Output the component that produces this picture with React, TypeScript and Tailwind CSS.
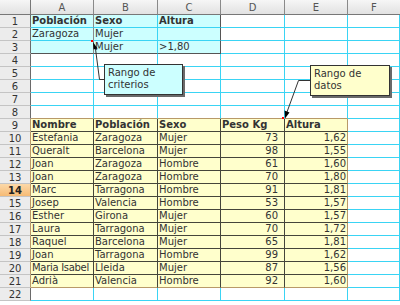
import React from "react";

type C = { t: string; b?: boolean; r?: boolean };

const rows: Record<number, C[]> = {
  1: [{ t: "Población", b: true }, { t: "Sexo", b: true }, { t: "Altura", b: true }],
  2: [{ t: "Zaragoza" }, { t: "Mujer" }],
  3: [{ t: "" }, { t: "Mujer" }, { t: ">1,80" }],
  9: [
    { t: "Nombre", b: true },
    { t: "Población", b: true },
    { t: "Sexo", b: true },
    { t: "Peso Kg", b: true },
    { t: "Altura", b: true },
  ],
};

const data: [string, string, string, string, string][] = [
  ["Estefania", "Zaragoza", "Mujer", "73", "1,62"],
  ["Queralt", "Barcelona", "Mujer", "98", "1,55"],
  ["Joan", "Zaragoza", "Hombre", "61", "1,60"],
  ["Joan", "Zaragoza", "Hombre", "70", "1,80"],
  ["Marc", "Tarragona", "Hombre", "91", "1,81"],
  ["Josep", "Valencia", "Hombre", "53", "1,57"],
  ["Esther", "Girona", "Mujer", "60", "1,57"],
  ["Laura", "Tarragona", "Mujer", "70", "1,72"],
  ["Raquel", "Barcelona", "Mujer", "65", "1,81"],
  ["Joan", "Tarragona", "Hombre", "99", "1,62"],
  ["Maria Isabel", "Lleida", "Mujer", "87", "1,56"],
  ["Adrià", "Valencia", "Hombre", "92", "1,60"],
];
data.forEach((d, i) => {
  rows[10 + i] = [
    { t: d[0] },
    { t: d[1] },
    { t: d[2] },
    { t: d[3], r: true },
    { t: d[4], r: true },
  ];
});

const LETTERS = ["A", "B", "C", "D", "E", "F"];

function cellCls(r: number, c: number): string {
  const inData = r >= 9 && r <= 21 && c >= 1 && c <= 5;
  const inCrit = r >= 1 && r <= 3 && c >= 1 && c <= 3;
  let bg = "bg-white";
  if (inData) bg = "bg-[#ffffcc]";
  else if (inCrit) bg = "bg-[#ccffff]";
  let br = "border-r-[#3ad4f4]";
  if (inData) br = c === 5 ? "border-r-[#b89968]" : "border-r-[#45453a]";
  else if (inCrit)
    br = c === 1 ? "border-r-[#8a8a8a]" : c === 3 ? "border-r-[#555555]" : "border-r-[#3ad4f4]";
  let bb = "border-b-[#3ad4f4]";
  if (inData) bb = r === 21 ? "border-b-[#b89968]" : "border-b-[#45453a]";
  else if (r === 8 && c >= 1 && c <= 5) bb = "border-b-[#b89968]";
  else if (inCrit && r === 3) bb = "border-b-[#555555]";
  return `${bg} ${br} ${bb}`;
}

export default function App() {
  const cells: React.ReactNode[] = [];
  cells.push(
    <div
      key="corner"
      className="border-r border-b border-r-[#777777] border-b-[#777777] bg-gradient-to-b from-[#f6f6f6] to-[#e2e2e2]"
    />
  );
  LETTERS.forEach((l, i) =>
    cells.push(
      <div
        key={"h" + l}
        className={`flex items-center justify-center border-b border-b-[#777777] bg-gradient-to-b from-[#f6f6f6] to-[#e2e2e2] text-[#555555] ${
          i < 5 ? "border-r border-r-[#8a8a8a]" : ""
        }`}
      >
        {l}
      </div>
    )
  );
  for (let r = 1; r <= 22; r++) {
    const sel = r === 14;
    const inDataRow = r >= 9 && r <= 21;
    cells.push(
      <div
        key={"r" + r}
        className={`flex items-center justify-center border-r border-b border-b-[#c4c4c4] ${
          inDataRow ? "border-r-[#b89968]" : "border-r-[#6a6a6a]"
        } ${sel ? "bg-gradient-to-b from-[#fcd9a8] to-[#f6bb74] font-bold text-[#222222]" : "bg-[#ececec] text-[#333333]"}`}
      >
        {r}
      </div>
    );
    for (let c = 1; c <= 6; c++) {
      const cd = rows[r]?.[c - 1];
      const right = cd?.r;
      const tight = cd?.t === "Maria Isabel";
      cells.push(
        <div
          key={`c${r}-${c}`}
          className={`overflow-hidden border-r border-b whitespace-nowrap leading-[12px] text-[#333333] ${cellCls(
            r,
            c
          )} ${right ? (c === 4 ? "text-right pr-[6px]" : "text-right pr-[1px]") : "pl-[1px]"} ${
            cd?.b ? "font-bold" : ""
          } ${tight ? "tracking-[-0.3px]" : ""}`}
        >
          {cd?.t ?? ""}
        </div>
      );
    }
  }

  return (
    <div
      className="relative w-[400px] h-[305px] overflow-hidden bg-white text-[10px]"
      style={{ fontFamily: '"DejaVu Sans", Verdana, sans-serif' }}
    >
      <div className="grid grid-cols-[31px_63px_64px_63px_64px_63px_52px] grid-rows-[15px_repeat(22,13px)]">
        {cells}
      </div>

      <div className="absolute left-[104px] top-[64px] w-[79px] h-[31px] border border-[#333333] bg-[#ccffff] shadow-[2px_2px_0_#6a6a6a] pl-[3px] pt-[2px] leading-[12px] text-[#333333]">
        <div>Rango de</div>
        <div>criterios</div>
      </div>
      <div className="absolute left-[310px] top-[65px] w-[80px] h-[31px] border border-[#333333] bg-[#ffffcc] shadow-[2px_2px_0_#6a6a6a] pl-[3px] pt-[2px] leading-[12px] text-[#333333]">
        <div>Rango de</div>
        <div>datos</div>
      </div>

      <svg className="absolute left-0 top-0" width="400" height="305" viewBox="0 0 400 305">
        <polyline points="104,79.5 99.5,79.5 95.5,49" fill="none" stroke="#333" strokeWidth="1" />
        <polygon points="93,42 97.5,48.5 93.5,49.5" fill="#000" />
        <rect x="91" y="40" width="2" height="2" fill="#ff0000" />

        <polyline points="310,80.5 298.5,80.5 287,112" fill="none" stroke="#333" strokeWidth="1" />
        <polygon points="285,118.5 284.5,110.5 289.5,112.5" fill="#000" />
        <rect x="282" y="117" width="2" height="2" fill="#ff0000" />
      </svg>
    </div>
  );
}
